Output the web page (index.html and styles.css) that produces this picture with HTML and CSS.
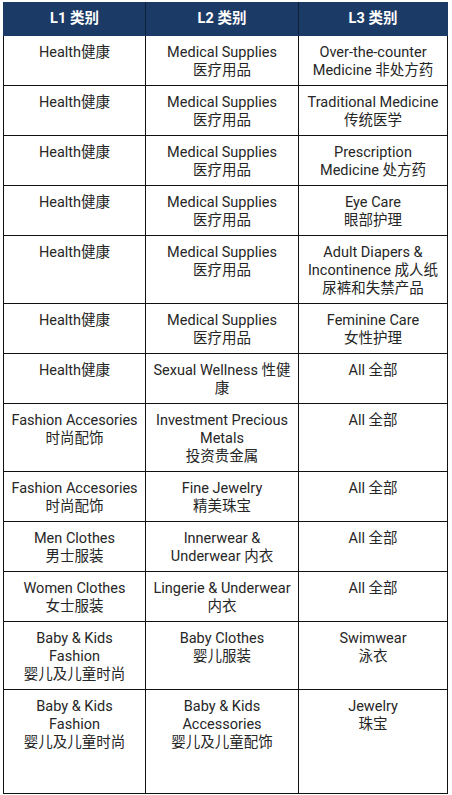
FILE: index.html
```html
<!DOCTYPE html>
<html lang="zh">
<head>
<meta charset="utf-8">
<link rel="stylesheet" href="styles.css">
</head>
<body>
<table class="cat">
  <colgroup><col class="c1"><col class="c2"><col class="c3"></colgroup>
  <thead>
    <tr><th>L1 类别</th><th>L2 类别</th><th>L3 类别</th></tr>
  </thead>
  <tbody>
    <tr><td>Health健康</td><td>Medical Supplies<br>医疗用品</td><td>Over-the-counter<br>Medicine 非处方药</td></tr>
    <tr><td>Health健康</td><td>Medical Supplies<br>医疗用品</td><td>Traditional Medicine<br>传统医学</td></tr>
    <tr><td>Health健康</td><td>Medical Supplies<br>医疗用品</td><td>Prescription<br>Medicine 处方药</td></tr>
    <tr><td>Health健康</td><td>Medical Supplies<br>医疗用品</td><td>Eye Care<br>眼部护理</td></tr>
    <tr><td>Health健康</td><td>Medical Supplies<br>医疗用品</td><td>Adult Diapers &amp;<br>Incontinence 成人纸<br>尿裤和失禁产品</td></tr>
    <tr><td>Health健康</td><td>Medical Supplies<br>医疗用品</td><td>Feminine Care<br>女性护理</td></tr>
    <tr><td>Health健康</td><td>Sexual Wellness 性健<br>康</td><td>All 全部</td></tr>
    <tr><td>Fashion Accesories<br>时尚配饰</td><td>Investment Precious<br>Metals<br>投资贵金属</td><td>All 全部</td></tr>
    <tr><td>Fashion Accesories<br>时尚配饰</td><td>Fine Jewelry<br>精美珠宝</td><td>All 全部</td></tr>
    <tr><td>Men Clothes<br>男士服装</td><td>Innerwear &amp;<br>Underwear 内衣</td><td>All 全部</td></tr>
    <tr><td>Women Clothes<br>女士服装</td><td>Lingerie &amp; Underwear<br>内衣</td><td>All 全部</td></tr>
    <tr><td>Baby &amp; Kids<br>Fashion<br>婴儿及儿童时尚</td><td>Baby Clothes<br>婴儿服装</td><td>Swimwear<br>泳衣</td></tr>
    <tr class="last"><td>Baby &amp; Kids<br>Fashion<br>婴儿及儿童时尚</td><td>Baby &amp; Kids<br>Accessories<br>婴儿及儿童配饰</td><td>Jewelry<br>珠宝</td></tr>
  </tbody>
</table>
</body>
</html>
```

FILE: styles.css
```css
html, body {
  margin: 0;
  padding: 0;
  background: #ffffff;
}

body {
  padding: 2px 0 0 3px;
  font-family: Roboto, "Noto Sans CJK SC", sans-serif;
  font-size: 14.5px;
  color: #262626;
}

.cat {
  border-collapse: collapse;
  table-layout: fixed;
  width: 444px;
}

.c1 { width: 142px; }
.c2 { width: 153px; }
.c3 { width: 149px; }

.cat th {
  background: #1b3a66;
  color: #ffffff;
  font-size: 14.5px;
  font-weight: 700;
  height: 32px;
  padding: 0;
  line-height: 18px;
  text-align: center;
  vertical-align: middle;
  border: 1px solid #1b3a66;
  border-right-color: #0e1f3a;
}

.cat th:last-child {
  border-right-color: #1b3a66;
}

.cat td {
  border: 1px solid #111111;
  text-align: center;
  vertical-align: top;
  line-height: 18px;
  padding: 8px 2px 5px;
  height: 36px;
  box-sizing: content-box;
}

.cat tr.last td {
  height: 90px;
}
```
